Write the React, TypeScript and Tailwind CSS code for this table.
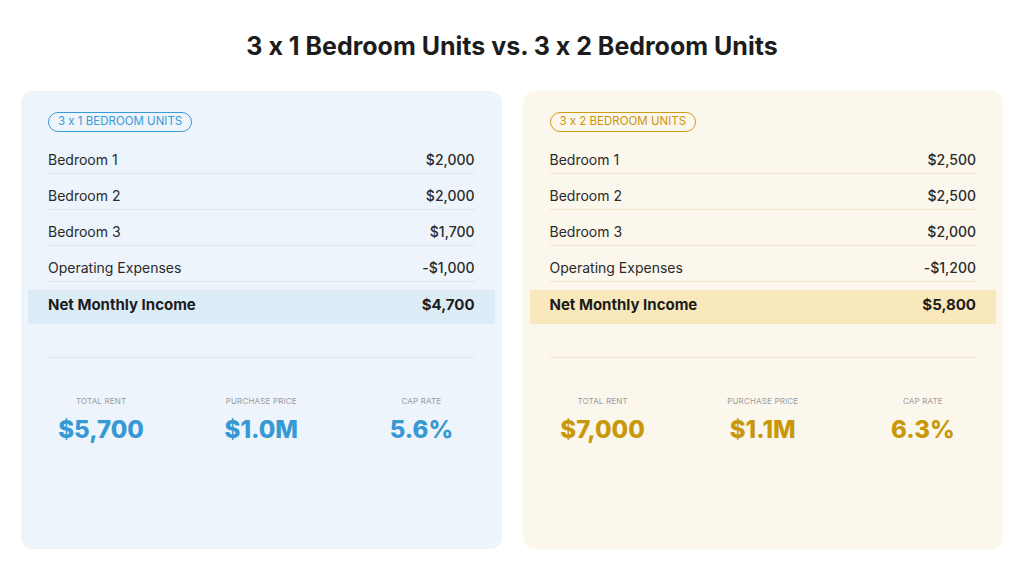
import React from "react";

type TRow = { label: string; value: string };
type TStat = { label: string; value: string };

interface ICardProps {
  tag: string;
  rows: TRow[];
  net: string;
  stats: TStat[];
  theme: "blue" | "gold";
}

const themes = {
  blue: {
    card: "bg-[#edf4fb]",
    pill: "border-[#3a9ad6] text-[#3a9ad6]",
    divider: "border-[#dbe7f2]",
    highlight: "bg-[#dcecf6]",
    value: "text-[#3799d3]",
  },
  gold: {
    card: "bg-[#fbf7ed]",
    pill: "border-[#cf9d12] text-[#c9960b]",
    divider: "border-[#f2e5c5]",
    highlight: "bg-[#f8e8bb]",
    value: "text-[#c9980a]",
  },
};

const Card = (props: ICardProps) => {
  const { tag, rows, net, stats, theme } = props;
  const t = themes[theme];

  return (
    <section className={`${t.card} flex-1 rounded-xl px-[27px] pt-[21px] flex flex-col`}>
      <div className="flex">
        <span
          className={`${t.pill} flex items-center h-5 px-[9px] rounded-full border text-[11.5px] leading-none`}
        >
          {tag}
        </span>
      </div>

      <div className="mt-[6px]">
        {rows.map((row) => (
          <div
            key={row.label}
            className={`${t.divider} flex justify-between items-center pt-[12px] pb-[3px] border-b text-[14px] leading-5 text-[#2a2a2a]`}
          >
            <span>{row.label}</span>
            <span className="font-medium">{row.value}</span>
          </div>
        ))}
      </div>

      <div
        className={`${t.highlight} -mx-[20px] px-[20px] mt-[8px] h-[34px] pb-[3px] flex justify-between items-center text-[15px] font-bold text-[#1c1c1c]`}
      >
        <span>Net Monthly Income</span>
        <span>{net}</span>
      </div>

      <div className={`${t.divider} mt-[33px] border-t`} />

      <div className="grid grid-cols-3 gap-[54px] mt-[37px]">
        {stats.map((stat) => (
          <div key={stat.label} className="flex flex-col items-center">
            <span className="text-[8px] leading-3 uppercase tracking-[0.02em] text-[#9b9b9b]">
              {stat.label}
            </span>
            <span className={`${t.value} mt-[7px] text-[24px] leading-8 font-extrabold`}>
              {stat.value}
            </span>
          </div>
        ))}
      </div>
    </section>
  );
};

const App = () => {
  return (
    <div
      className="w-[1024px] h-[576px] bg-white flex flex-col [font-feature-settings:'calt'_0]"
      style={{ fontFamily: "Inter, 'Noto Sans', sans-serif" }}
    >
      <h1 className="pt-[30px] h-[91px] text-center text-[25px] leading-8 font-bold text-[#1c1c1c]">
        3 x 1 Bedroom Units vs. 3 x 2 Bedroom Units
      </h1>
      <div className="flex gap-[21px] px-[21px] h-[458px]">
        <Card
          theme="blue"
          tag="3 x 1 BEDROOM UNITS"
          rows={[
            { label: "Bedroom 1", value: "$2,000" },
            { label: "Bedroom 2", value: "$2,000" },
            { label: "Bedroom 3", value: "$1,700" },
            { label: "Operating Expenses", value: "-$1,000" },
          ]}
          net="$4,700"
          stats={[
            { label: "Total Rent", value: "$5,700" },
            { label: "Purchase Price", value: "$1.0M" },
            { label: "Cap Rate", value: "5.6%" },
          ]}
        />
        <Card
          theme="gold"
          tag="3 x 2 BEDROOM UNITS"
          rows={[
            { label: "Bedroom 1", value: "$2,500" },
            { label: "Bedroom 2", value: "$2,500" },
            { label: "Bedroom 3", value: "$2,000" },
            { label: "Operating Expenses", value: "-$1,200" },
          ]}
          net="$5,800"
          stats={[
            { label: "Total Rent", value: "$7,000" },
            { label: "Purchase Price", value: "$1.1M" },
            { label: "Cap Rate", value: "6.3%" },
          ]}
        />
      </div>
    </div>
  );
};

export default App;
